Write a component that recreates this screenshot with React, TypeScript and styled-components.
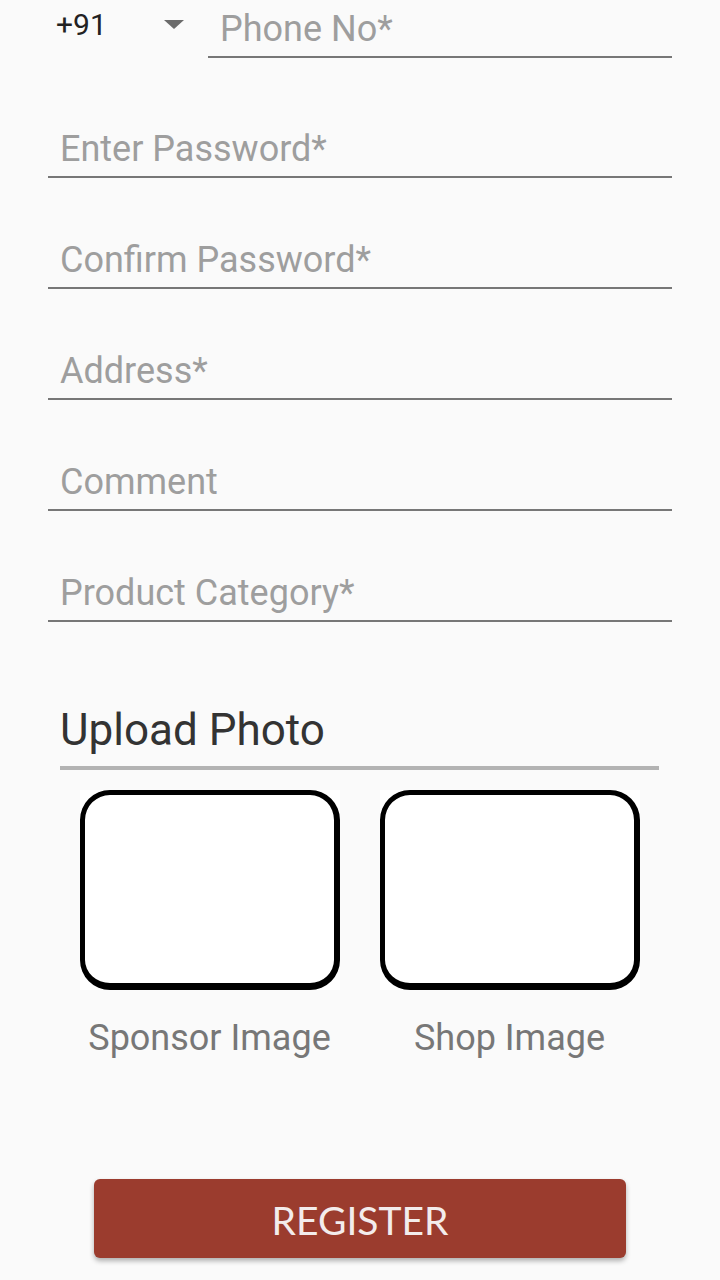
import React from "react";
import styled, { createGlobalStyle } from "styled-components";

const Global = createGlobalStyle`
  html, body {
    margin: 0;
    padding: 0;
    background: #fafafa;
  }
  body {
    font-family: Roboto, "Noto Sans", sans-serif;
  }
`;

const Page = styled.div`
  width: 720px;
  height: 1280px;
  overflow: hidden;
  background: #fafafa;
  display: flex;
  flex-direction: column;
  padding: 0 48px;
  box-sizing: border-box;
`;

const PhoneRow = styled.div`
  display: flex;
  align-items: flex-start;
  margin-top: 7px;
`;

const CountrySelect = styled.div`
  width: 160px;
  display: flex;
  align-items: flex-start;
  justify-content: space-between;
  padding: 0 24px 0 8px;
  box-sizing: border-box;
  font-family: Roboto, sans-serif;
  font-size: 30px;
  line-height: 34px;
  color: #222;
  transform: translateY(1px);
`;

const Caret = styled.span`
  width: 0;
  height: 0;
  margin-top: 12px;
  border-left: 10px solid transparent;
  border-right: 10px solid transparent;
  border-top: 9px solid #6b6b6b;
`;

const Field = styled.div<{ $gap?: number }>`
  flex: none;
  margin-top: ${(p) => p.$gap ?? 0}px;
  padding: 1px 0 6px 12px;
  border-bottom: 2px solid #777;
  font-family: Roboto, sans-serif;
  font-size: 36px;
  line-height: 42px;
  color: #9e9e9e;
  white-space: nowrap;
`;

const PhoneField = styled(Field)`
  flex: 1;
`;

const Upload = styled.section`
  margin: 81px 13px 0 12px;
  display: flex;
  flex-direction: column;
`;

const Heading = styled.h2`
  margin: 0;
  padding: 1px 0 10px 0;
  border-bottom: 4px solid #b3b3b3;
  font-family: Roboto, sans-serif;
  font-weight: 400;
  font-size: 44px;
  line-height: 52px;
  color: #333;
`;

const Pickers = styled.div`
  display: flex;
  justify-content: center;
  gap: 40px;
  margin-top: 20px;
`;

const Picker = styled.div`
  display: flex;
  flex-direction: column;
  align-items: center;
  width: 260px;
`;

const Frame = styled.div`
  width: 260px;
  height: 200px;
  background: #fff;
  display: flex;
`;

const FrameBorder = styled.div`
  flex: 1;
  border-style: solid;
  border-color: #000;
  border-width: 5px 6px 7px 5px;
  border-radius: 30px;
  background: #fff;
`;

const Caption = styled.div`
  margin-top: 27px;
  font-family: Roboto, sans-serif;
  font-size: 36px;
  line-height: 42px;
  color: #777;
  white-space: nowrap;
`;

const RegisterButton = styled.button`
  flex: none;
  align-self: center;
  margin-top: 120px;
  width: 532px;
  height: 79px;
  border: none;
  border-radius: 6px;
  background: #9b3c2e;
  color: #f3ecec;
  font-family: Lato, "Liberation Sans", sans-serif;
  font-size: 39px;
  box-shadow: 0 3px 5px rgba(0, 0, 0, 0.3);
  padding: 2px 0 0 0;
`;

const fields: { label: string; gap: number }[] = [
  { label: "Enter Password*", gap: 69 },
  { label: "Confirm Password*", gap: 60 },
  { label: "Address*", gap: 60 },
  { label: "Comment", gap: 60 },
  { label: "Product Category*", gap: 60 },
];

export default function App() {
  return (
    <>
      <Global />
      <Page>
        <PhoneRow>
          <CountrySelect>
            <span>+91</span>
            <Caret />
          </CountrySelect>
          <PhoneField>Phone No*</PhoneField>
        </PhoneRow>
        {fields.map((f) => (
          <Field key={f.label} $gap={f.gap}>
            {f.label}
          </Field>
        ))}
        <Upload>
          <Heading>Upload Photo</Heading>
          <Pickers>
            {["Sponsor Image", "Shop Image"].map((c) => (
              <Picker key={c}>
                <Frame>
                  <FrameBorder />
                </Frame>
                <Caption>{c}</Caption>
              </Picker>
            ))}
          </Pickers>
        </Upload>
        <RegisterButton>REGISTER</RegisterButton>
      </Page>
    </>
  );
}
